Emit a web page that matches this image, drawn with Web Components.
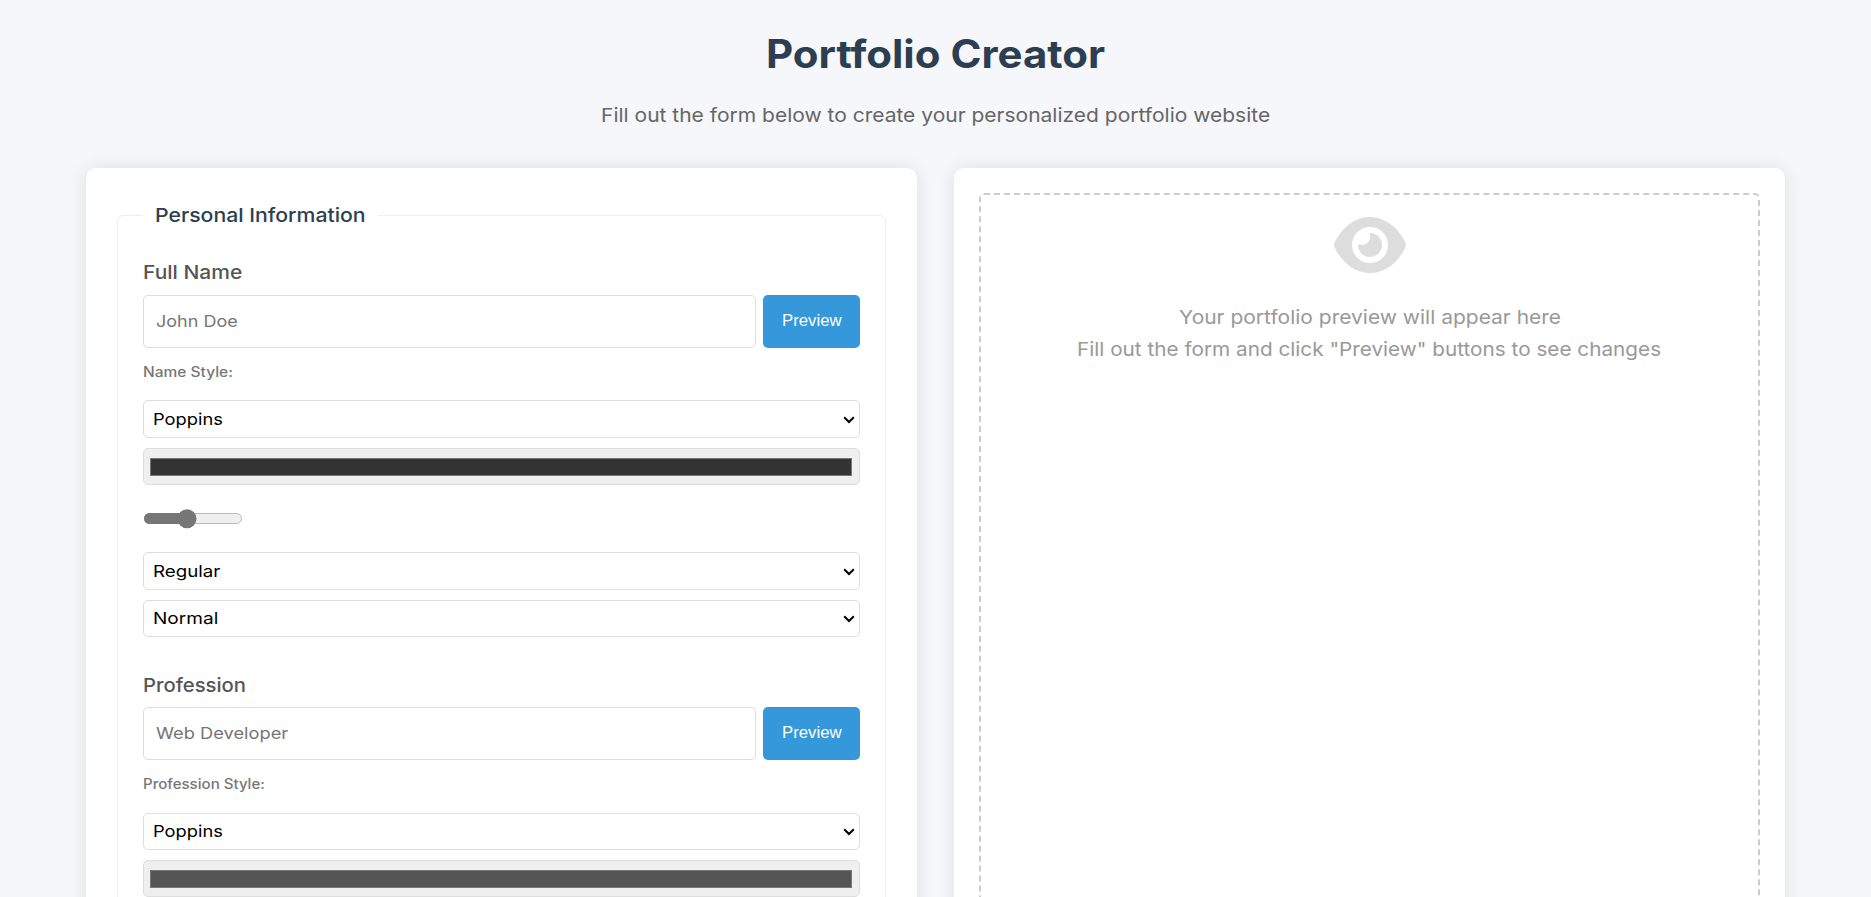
<!DOCTYPE html>
<html lang="en">
<head>
<meta charset="utf-8">
<title>Portfolio Creator</title>
<style>
html,body{margin:0;height:100%;overflow:hidden;background:#f5f7fb;font-family:Inter,"Open Sans",sans-serif}
</style>
</head>
<body>
<portfolio-app></portfolio-app>
<script>
const define = (name, html, setup) => {
  const tpl = document.createElement('template');
  tpl.innerHTML = html;
  customElements.define(name, class extends HTMLElement {
    connectedCallback() {
      if (this.shadowRoot) return;
      this.attachShadow({ mode: 'open' }).appendChild(tpl.content.cloneNode(true));
      if (setup) setup(this, this.shadowRoot);
    }
  });
};

/* A single line of text widened to an exact visible width. */
const ctx = document.createElement('canvas').getContext('2d');
define('fit-text', `<style>
:host{display:inline-block;white-space:nowrap;vertical-align:top;text-align:left}
span{display:block;width:max-content;transform-origin:0 0}</style><span></span>`, (el, root) => {
  const span = root.querySelector('span');
  const text = el.getAttribute('text');
  const width = +el.getAttribute('width');
  const size = el.getAttribute('size');
  const weight = el.getAttribute('weight') || 400;
  const family = el.getAttribute('family') || 'Inter';
  span.textContent = text;
  span.style.font = `${weight} ${size}px/var(--line,inherit) "${family}",sans-serif`;
  ctx.font = `${weight} ${size}px "${family}", sans-serif`;
  const m = ctx.measureText(text);
  const ink = m.actualBoundingBoxLeft + m.actualBoundingBoxRight;
  const scale = width / ink;
  span.style.transform = `scaleX(${scale.toFixed(4)})`;
  span.style.marginLeft = (m.actualBoundingBoxLeft * scale).toFixed(2) + 'px';
  el.style.width = width + 'px';
});

define('page-header', `<style>
:host{display:flex;flex-direction:column;align-items:center;height:138px;padding:30px 0 0 1.5px}
h1{margin:0 0 22px;color:#2c3e50;--line:48px;height:48px}
p{margin:0;color:#666;--line:31px;height:30px}
</style>
<h1><fit-text text="Portfolio Creator" width="337" size="39" weight="700"></fit-text></h1>
<p><fit-text text="Fill out the form below to create your personalized portfolio website" width="668" size="19"></fit-text></p>`);

define('content-card', `<style>
:host{display:block;box-sizing:border-box;background:#fff;border-radius:10px;box-shadow:0 0 20px rgba(0,0,0,.1);height:1100px}
</style><slot></slot>`);

define('preview-button', `<style>
:host{display:block;flex:none;width:97px;height:53px}
button{display:block;width:100%;height:100%;border:0;border-radius:5px;background:#3498db;color:#fff;padding:0 0 0 20px;--line:51px;text-align:left}
button fit-text{height:53px}
</style><button type="button"><fit-text text="Preview" width="59" size="16" family="Liberation Sans"></fit-text></button>`);

define('text-field', `<style>
:host{display:flex;gap:7px}
div{flex:1;box-sizing:border-box;height:53px;border:1px solid #ddd;border-radius:5px;padding-left:12px;color:#757575;--line:50px}
</style><div><slot></slot></div><preview-button></preview-button>`);

define('select-field', `<style>
:host{display:flex;justify-content:space-between;align-items:flex-start;box-sizing:border-box;height:38px;border:1px solid #ddd;border-radius:5px;background:#fff;padding:0 4px 0 10px;color:#000;--line:37px}
svg{display:block;margin-top:var(--arrow-top,15px)}
</style><slot></slot><svg width="12" height="8" viewBox="0 0 12 8"><path d="M1.2 1.2 6 6 10.8 1.2" fill="none" stroke="#000" stroke-width="2"/></svg>`);

define('color-field', `<style>
:host{display:block;box-sizing:border-box;height:37px;border:1px solid #ddd;border-radius:5px;background:#efefef;padding:9px 7px 0 6px}
div{box-sizing:border-box;height:18px;border:1px solid #777;background:var(--swatch)}
</style><div></div>`);

define('range-field', `<style>
:host{display:flex;align-items:center;height:67px;padding-left:1px}
svg{display:block}
</style><svg width="98" height="20" viewBox="0 0 98 20">
<rect x=".5" y="4.5" width="97" height="10" rx="5" fill="#efefef" stroke="#b9b9b9"/>
<rect x="0" y="4" width="48" height="11" rx="5.5" fill="#767676"/>
<circle cx="43" cy="9.7" r="9.5" fill="#767676"/></svg>`);

define('form-group', `<style>
:host{display:block}
.label{height:30px;--line:31px;color:#555;margin-bottom:var(--label-gap,8px);padding-left:.8px}
.style{height:20px;--line:20px;color:#777;margin:14px 0 var(--style-gap,18px);padding-left:.8px}
.controls{display:flex;flex-direction:column}
</style>
<div class="label"><slot name="label"></slot></div>
<slot name="field"></slot>
<div class="style"><slot name="style-label"></slot></div>
<div class="controls"><slot></slot></div>`);

define('info-form', `<style>
:host{display:block;padding:32px 31px 0}
fieldset{margin:0;border:1px solid #eee;border-radius:6px;padding:27px 25px 0;min-width:0;height:1000px}
legend{box-sizing:border-box;width:235px;height:30px;padding:0 13px;color:#2c3e50;--line:31px}
.gap{margin-top:10px}
.short{height:37px;--line:35px;--arrow-top:14px}
form-group+form-group{margin-top:33px;--label-gap:7px;--style-gap:19px}
</style>
<fieldset>
<legend><fit-text text="Personal Information" width="209" size="19" weight="500"></fit-text></legend>
<form-group>
  <fit-text slot="label" text="Full Name" width="98" size="19" weight="500"></fit-text>
  <text-field slot="field"><fit-text text="John Doe" width="81" size="16.5"></fit-text></text-field>
  <fit-text slot="style-label" text="Name Style:" width="88.5" size="14" weight="500"></fit-text>
  <select-field><fit-text text="Poppins" width="68" size="16.5"></fit-text></select-field>
  <color-field class="gap" style="--swatch:#333"></color-field>
  <range-field></range-field>
  <select-field><fit-text text="Regular" width="66" size="16.5"></fit-text></select-field>
  <select-field class="gap short"><fit-text text="Normal" width="63" size="16.5"></fit-text></select-field>
</form-group>
<form-group>
  <fit-text slot="label" text="Profession" width="101.5" size="19" weight="500"></fit-text>
  <text-field slot="field"><fit-text text="Web Developer" width="132" size="16.5"></fit-text></text-field>
  <fit-text slot="style-label" text="Profession Style:" width="120.5" size="14" weight="500"></fit-text>
  <select-field class="short"><fit-text text="Poppins" width="68" size="16.5"></fit-text></select-field>
  <color-field class="gap" style="--swatch:#555"></color-field>
</form-group>
</fieldset>`);

define('preview-pane', `<style>
:host{display:block;padding:25px}
.drop{box-sizing:border-box;height:1050px;border:2px dashed #ccc;border-radius:5px;display:flex;flex-direction:column;align-items:center;padding-top:18px;color:#999;--line:32px}
svg{display:block;margin-bottom:25px}
fit-text{height:32px}
</style>
<div class="drop">
<svg width="72" height="64" viewBox="0 0 576 512"><path fill="#ddd" d="M288 32c-80.8 0-145.5 36.8-192.6 80.6C48.6 156 17.3 208 2.5 243.7c-3.3 7.9-3.3 16.7 0 24.6C17.3 304 48.6 356 95.4 399.4C142.5 443.2 207.2 480 288 480s145.5-36.8 192.6-80.6c46.8-43.5 78.1-95.4 93-131.1c3.3-7.9 3.3-16.7 0-24.6c-14.9-35.7-46.2-87.7-93-131.1C433.5 68.8 368.8 32 288 32zM144 256a144 144 0 1 1 288 0 144 144 0 1 1 -288 0zm144-64c0 35.3-28.7 64-64 64c-7.1 0-13.9-1.2-20.3-3.3c-5.5-1.8-11.9 1.6-11.7 7.4c.3 6.9 1.3 13.8 3.2 20.7c13.7 51.2 66.4 81.6 117.6 67.9s81.6-66.4 67.9-117.6c-11.1-41.5-47.8-69.4-88.6-71.1c-5.8-.2-9.2 6.1-7.4 11.7c2.1 6.4 3.3 13.2 3.3 20.3z"/></svg>
<fit-text text="Your portfolio preview will appear here" width="382" size="19"></fit-text>
<fit-text text='Fill out the form and click "Preview" buttons to see changes' width="583" size="19"></fit-text>
</div>`);

define('portfolio-app', `<style>
:host{display:block;height:100vh;overflow:hidden}
main{display:grid;grid-template-columns:831px 831px;gap:37px;justify-content:center}
</style>
<page-header></page-header>
<main>
<content-card><info-form></info-form></content-card>
<content-card><preview-pane></preview-pane></content-card>
</main>`);
</script>
</body>
</html>
